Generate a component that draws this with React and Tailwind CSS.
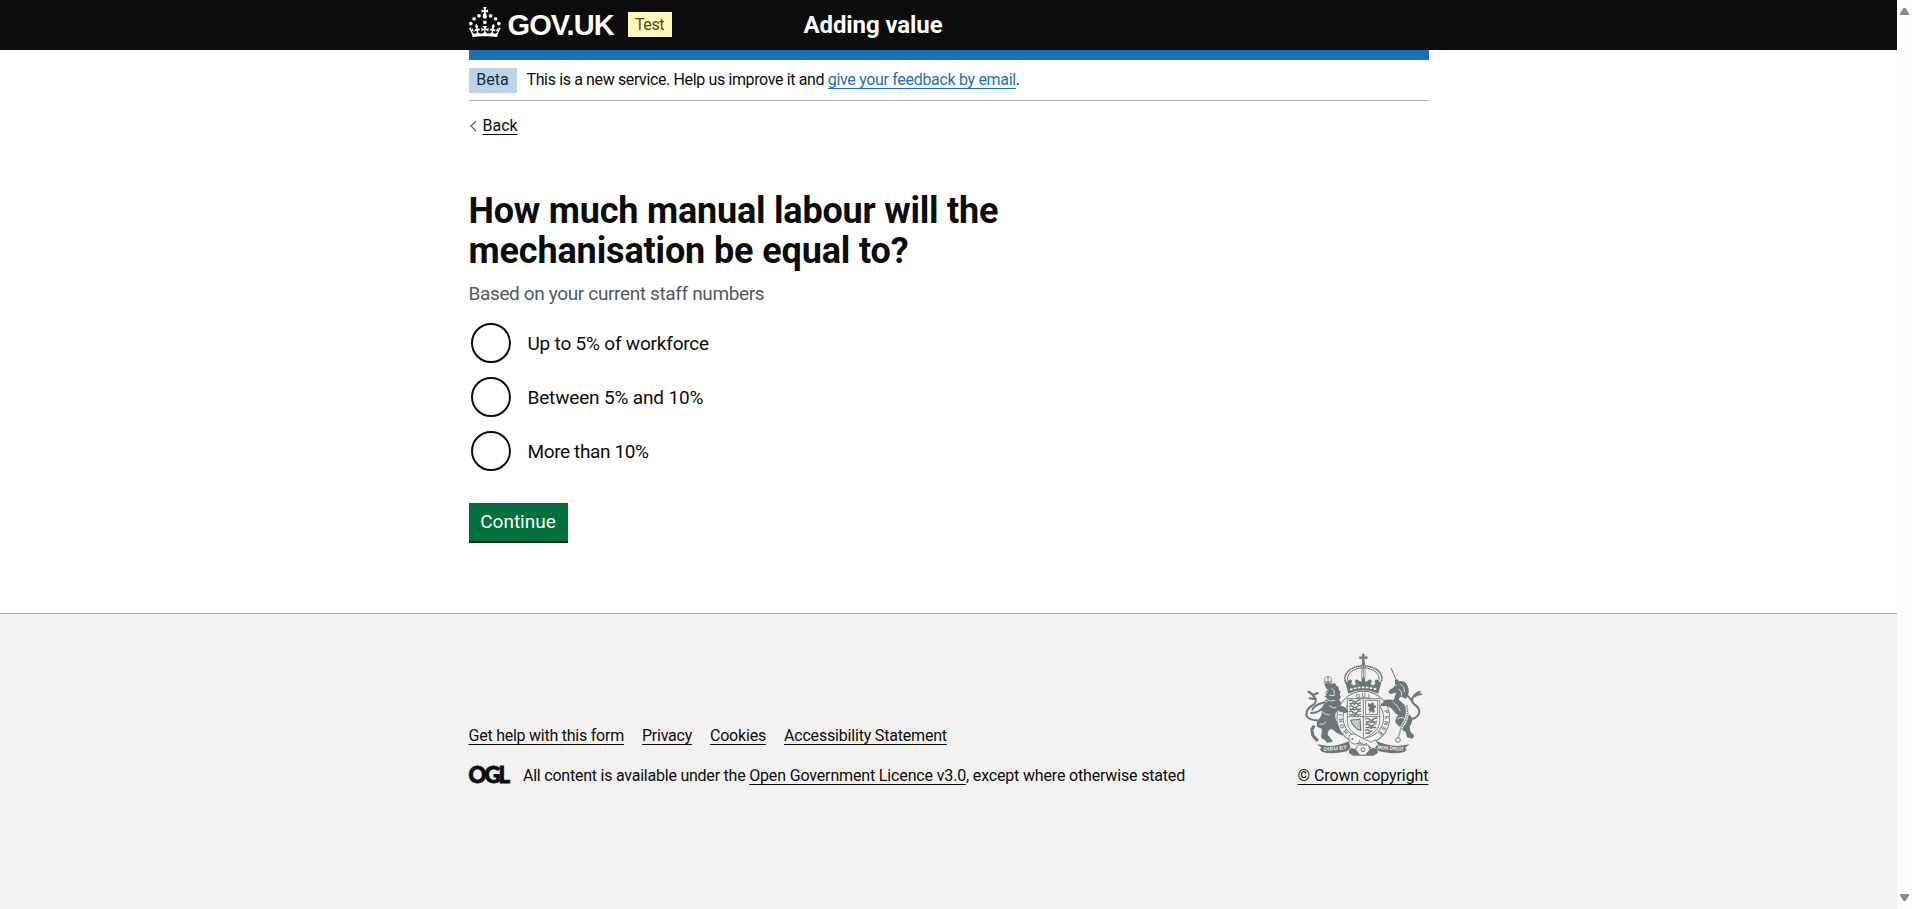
const link = "underline decoration-1 underline-offset-[3px] [text-decoration-skip-ink:none]";

function Crown() {
  return (
    <svg width="32" height="30" viewBox="0 0 64 60" fill="currentColor" aria-hidden="true">
      <circle cx="20" cy="17.6" r="3.7" />
      <circle cx="10.2" cy="23.5" r="3.7" />
      <circle cx="3.7" cy="33.2" r="3.7" />
      <circle cx="31.7" cy="30.6" r="3.7" />
      <circle cx="43.3" cy="17.6" r="3.7" />
      <circle cx="53.2" cy="23.5" r="3.7" />
      <circle cx="59.7" cy="33.2" r="3.7" />
      <path d="M33.1,9.8c.2-.1.3-.3.5-.5l4.6,2.4v-6.8l-4.6,1.5c-.1-.2-.3-.3-.5-.5l1.9-5.9h-6.7l1.9,5.9c-.2.1-.3.3-.5.5l-4.6-1.5v6.8l4.6-2.4c.1.2.3.3.5.5l-2.6,8c-.9,2.8,1.2,5.7,4.1,5.7h0c3,0,5.1-2.9,4.1-5.7l-2.6-8ZM37,37.9s-3.4,3.8-4.1,6.1c2.2,0,4.2-.5,6.4-2.8l-.7,8.5c-2-2.8-4.4-4.1-5.7-3.8.1,3.1.5,6.7,5.8,7.2,3.7.3,6.7-1.5,7-3.8.4-2.6-2-4.3-3.7-1.6-1.4-4.5,2.4-6.1,4.9-3.2-1.9-4.5-1.8-7.7,2.4-10.9,3,4,2.6,7.3-1.2,11.1,2.4-1.3,6.2,0,4,4.6-1.2-2.8-3.7-2.2-4.2.2-.3,1.7.7,3.7,3,4.2,1.9.3,4.7-.9,7-5.9-1.3,0-2.4.7-3.9,1.7l2.4-8c.6,2.3,1.4,3.7,2.2,4.5.6-1.6.5-2.8,0-5.3l5,1.8c-2.6,3.6-5.2,8.7-7.3,17.5-7.4-1.1-15.7-1.7-24.5-1.7h0c-8.8,0-17.1.6-24.5,1.7-2.1-8.9-4.7-13.9-7.3-17.5l5-1.8c-.5,2.5-.6,3.7,0,5.3.8-.8,1.6-2.3,2.2-4.5l2.4,8c-1.5-1-2.6-1.7-3.9-1.7,2.3,5,5.2,6.2,7,5.9,2.3-.4,3.3-2.4,3-4.2-.5-2.4-3-3.1-4.2-.2-2.2-4.6,1.6-6,4-4.6-3.7-3.7-4.2-7.1-1.2-11.1,4.2,3.2,4.3,6.4,2.4,10.9,2.5-2.8,6.3-1.3,4.9,3.2-1.8-2.7-4.1-1-3.7,1.6.3,2.3,3.3,4.1,7,3.8,5.4-.5,5.7-4.2,5.8-7.2-1.3-.2-3.7,1-5.7,3.8l-.7-8.5c2.2,2.3,4.2,2.7,6.4,2.8-.7-2.3-4.1-6.1-4.1-6.1h10.6Z" />
    </svg>
  );
}

/* Royal coat of arms: crown, garter and shield, lion, unicorn, motto ribbon. */
function CoatOfArms() {
  const ink = "#6c7679";
  const paper = "#f3f2f1";
  return (
    <svg width="118" height="104" viewBox="45 38 354 312" aria-hidden="true" fill={ink} stroke="none">
      {/* lion */}
      <circle cx="117" cy="118" r="10" fill={paper} stroke={ink} strokeWidth="3" strokeDasharray="4 1.5" />
      <path d="M104 125h26M117 108v18" stroke={ink} strokeWidth="3" />
      <path d="M105 130q12-4 24 0l9-2 4 8 7 3 0 9 6 6-3 8 4 9-5 6 3 8 20 10 10 8-2 8-10 2-24-6-8 12q-4 12 4 26l8 20 14 8 4 10-12 2-16-8-12-10q-8-2-12 6l-2 10 10 12q6 4 4 10l-16 2q-6-10-14-12l-4-8q4-14 2-22l-14-6q-4-14 10-28 6-8 4-22 2-18 18-26l-8-2 6-8-8-4 7-6-6-7 8-5-4-9z" />
      <path d="M76 256l-8 12 4 18 14 16" fill="none" stroke={ink} strokeWidth="9" strokeLinejoin="round" />
      <path d="M108 146l10 3M106 156l10 1M128 144q10 6 8 18M120 164q8 4 18 0M112 176q12 10 26 4M120 196q14 10 28 6M100 214q8 10 22 10M92 252q12 2 20-8" stroke={paper} strokeWidth="2.5" fill="none" />
      <path d="M108 186q-30 6-38 22M100 204q-14 14-34 14M84 240q-26 0-32-16 0-20 20-30 10-6 8-18-6-12-22-22M58 154q10 2 14 12M72 164l14-6M76 176l-14-2" fill="none" stroke={ink} strokeWidth="6" strokeLinecap="round" />
      {/* unicorn */}
      <path d="M306 83l16 36" stroke={ink} strokeWidth="3" />
      <path d="M318 119l8-2 4 6q16-4 24 10 8 14 4 28 0 10-8 14l-12-6q-10 2-8 10l14 12q12 12 16 30 8 6 10 18-2 12-8 18l2 16 12 14-6 8-16-4-4-16q-10-4-16-14l-14-12q-4-12 8-24-10-4-16-16-8-10-24-12-14 0-16-8l8-8q18-6 34-2l4-12 4-10-18 4-6-6 4-6q14-8 16-16z" />
      <path d="M316 134l7 1M334 132q14 8 12 24M330 146q10 8 8 20M310 184q18 12 24 28M324 236q12-8 22-2M336 256q10 0 16-8" stroke={paper} strokeWidth="2.5" fill="none" />
      <path d="M352 238q30 0 38-18 4-16-14-28-12-10-4-22 8-12 20-16M396 162q-12-2-18 6M366 178l-8-10" fill="none" stroke={ink} strokeWidth="6" strokeLinecap="round" />
      <path d="M354 196q4 30-6 48-14 18-20 48" fill="none" stroke={paper} strokeWidth="9" />
      <path d="M354 196q4 30-6 48-14 18-20 48" fill="none" stroke={ink} strokeWidth="5" strokeDasharray="4 3" />
      <circle cx="327" cy="299" r="7" fill={paper} stroke={ink} strokeWidth="3" />
      {/* garter */}
      <circle cx="223" cy="232" r="70" fill={paper} stroke={ink} strokeWidth="21" />
      <circle cx="223" cy="232" r="70" fill="none" stroke={paper} strokeWidth="16" />
      <g fontFamily="Liberation Sans" fontWeight="700" fontSize="17" textAnchor="middle">
        <text x="206" y="173">Q</text>
        <text x="224" y="171">U</text>
        <text x="239" y="172">I</text>
        <text transform="translate(160 224) rotate(-86)">I</text>
        <text transform="translate(161 240) rotate(-96)">N</text>
        <text transform="translate(164 256) rotate(-110)">O</text>
        <text transform="translate(174 272) rotate(-126)">H</text>
        <text transform="translate(287 216) rotate(76)">P</text>
        <text transform="translate(288 232) rotate(90)">E</text>
        <text transform="translate(286 247) rotate(104)">N</text>
        <text transform="translate(280 262) rotate(118)">S</text>
        <text transform="translate(270 275) rotate(134)">E</text>
      </g>
      {/* shield */}
      <path d="M175 175h97v68c0 24-22 40-49 52-27-12-48-28-48-52z" fill={paper} stroke={ink} strokeWidth="2.5" />
      <path d="M223 174v118M175 229h97" stroke={ink} strokeWidth="2.5" />
      <g fill="none" stroke={ink} strokeWidth="4">
        <path d="M180 182q6-6 12 0t12 0 12-3M181 188q6 4 10 0l5 4 6-4 6 3 8-4M184 193l4-3M204 193l5-3" />
        <path d="M180 199q6-6 12 0t12 0 12-3M181 205q6 4 10 0l5 4 6-4 6 3 8-4M184 210l4-3M204 210l5-3" />
        <path d="M180 216q6-6 12 0t12 0 12-3M181 222q6 4 10 0l5 4 6-4 6 3 8-4" />
        <path d="M229 237q6-6 12 0t12 0 12-3M230 243q6 4 10 0l5 4 6-4 6 3 8-4M234 248l4-3M252 248l5-3" />
        <path d="M229 254q6-6 12 0t12 0 10-3M230 260q6 4 10 0l5 4 6-4 6 3 4-4" />
        <path d="M228 271q6-6 12 0t10 0M229 277q6 4 10 0l5 2" />
      </g>
      <rect x="230" y="180" width="36" height="43" fill="none" stroke={ink} strokeWidth="2.5" />
      <path d="M238 188l8 3 3-5 7 4-3 7 6-3 2 6-7 6 4 6-5 7-4-6-9 6 2-8-5-5 6-3-6-5z" />
      <path d="M185 240c10-4 14 2 28-4l2 34c-8-2-22-8-30-30z" fill="none" stroke={ink} strokeWidth="3.5" />
      <path d="M191 243l4 14M197 243l3 20M203 241l2 26M209 240l1 28" stroke={ink} strokeWidth="2" />
      {/* paws over the garter */}
      <path d="M146 196q14-2 28 10l4 8-8 4-18-4-12-10z" />
      <path d="M316 188q-20-10-38 0l-4 8 10 2q12-4 30 2z" />
      {/* crown */}
      <path d="M219 40h8l-1 9 9-1v8l-9-1 2 20h-10l2-20-9 1v-8l9 1z" />
      <path d="M170 126c-10-26 14-48 53-50 39 2 64 24 53 50" fill="none" stroke={ink} strokeWidth="6" strokeLinecap="round" strokeDasharray="0.1 6.5" />
      <path d="M177 124c-7-22 13-40 46-42 33 2 53 20 46 42" fill="none" stroke={ink} strokeWidth="3" />
      <path d="M218 78v36M228 78v36" stroke={ink} strokeWidth="2" />
      <path d="M223 78v38" stroke={ink} strokeWidth="5" strokeLinecap="round" strokeDasharray="0.1 7" />
      <path d="M168 122l8 4q2-10 10-8 6 4 0 12l10 6 6-8q-8-4-2-10 8-2 10 4l8 2q-2-10 5-14 7 4 5 14l8-2q2-6 10-4 6 6-2 10l6 8 10-6q-6-8 0-12 8-2 10 8l8-4-10 38q-48-20-90 0z" />
      <path d="M183 148q40-14 82 0" fill="none" stroke={paper} strokeWidth="5" strokeDasharray="8 4" />
      {/* ribbon */}
      <path d="M84 312l20 3c26 6 52-2 76-12l4 20-10 10c-26 6-50 8-74 2l-8-8 6-4z" />
      <path d="M362 312l-20 3c-26 6-54-2-78-12l-4 20 10 10c26 6 52 8 76 2l8-8-6-4z" />
      <g fontFamily="Liberation Sans" fontWeight="700" fontSize="15" fill={paper}>
        <text x="104" y="329" textLength="70" lengthAdjust="spacingAndGlyphs" transform="rotate(-5 140 324)">DIEU ET</text>
        <text x="266" y="329" textLength="78" lengthAdjust="spacingAndGlyphs" transform="rotate(5 306 324)">MON DROIT</text>
      </g>
      {/* strap and buckle */}
      <path d="M180 286q12-10 26 0l40 20 12-8 10 14-14 14-42-20-14 6q-22-6-18-26z" fill={paper} stroke={ink} strokeWidth="2.5" />
      <circle cx="190" cy="296" r="3" />
      <circle cx="212" cy="302" r="2.5" />
      <circle cx="232" cy="310" r="2.5" />
      <path d="M180 338q-2-12 8-14l14 2 2-8 8 10q10 12 22 0l8-10 2 8 14-2q10 2 8 14l-12 8h-62z" />
      <path d="M206 314h32l4 14-12 16h-18l-12-16z" fill={paper} stroke={ink} strokeWidth="2.5" />
      <circle cx="222" cy="328" r="6" fill="none" stroke={ink} strokeWidth="3" />
    </svg>
  );
}

function Radio({ label, tracking }) {
  return (
    <label className="flex h-11 items-center pl-0.5">
      <span className="size-10 shrink-0 rounded-full border-2 border-[#0b0c0c] bg-white" />
      <span className={`pl-[17px] text-[19px] leading-[25px] ${tracking}`}>{label}</span>
    </label>
  );
}

export default function App() {
  return (
    <div className="flex h-[909px] w-full overflow-hidden bg-white font-[Roboto,sans-serif] text-[#0b0c0c]">
      <div className="flex min-w-0 flex-1 flex-col">
        <header className="h-[50px] shrink-0 bg-[#0b0c0c] text-white">
          <div className="mx-auto flex h-full w-[960px] items-center">
            <div className="flex w-[335px] items-center">
              <div className="flex items-center pb-[6px]">
                <Crown />
              </div>
              <span className="ml-[7px] w-[110px] font-['Liberation_Sans',sans-serif] text-[29px] leading-[50px] font-bold tracking-[-0.9px]">
                GOV.UK
              </span>
              <span className="mb-px ml-2.5 flex h-[25px] w-11 items-center justify-center bg-[#fff7bf] text-base leading-5 tracking-[-0.4px] text-[#594d00]">
                Test
              </span>
            </div>
            <span className="text-2xl font-bold tracking-[-0.1px]">Adding value</span>
          </div>
        </header>

        <div className="mx-auto w-[960px] grow">
          <div className="h-2.5 bg-[#1d70b8]" />
          <div className="flex h-[41px] items-center gap-2.5 border-b border-[#b1b4b6]">
            <span className="flex h-[25px] w-12 items-center justify-center bg-[#bbd4ea] text-base text-[#0c2d4a]">Beta</span>
            <p className="text-base whitespace-pre">
              <span className="tracking-[-0.37px]">This is a new service. Help us improve it and </span>
              <a className={`${link} tracking-[-0.32px] text-[#1d70b8]`}>give your feedback by email</a>.
            </p>
          </div>
          <div className="mt-[15px] flex h-5 items-center">
            <svg width="7" height="12" viewBox="0 0 7 12" fill="none" stroke="#505a5f" strokeWidth="1.2" className="ml-px">
              <path d="M6 1L1 6l5 5" />
            </svg>
            <a className={`${link} ml-[6px] text-base`}>Back</a>
          </div>

          <main className="pt-[55px]">
            <h1 className="text-4xl leading-[40px] font-bold whitespace-pre">
              <span className="block tracking-[-0.21px]">How much manual labour will the</span>
              <span className="block tracking-[-0.14px]">mechanisation be equal to?</span>
            </h1>
            <p className="mt-2.5 text-[19px] leading-[25px] tracking-[-0.36px] text-[#505a5f]">Based on your current staff numbers</p>
            <div className="mt-[15px] flex flex-col gap-2.5">
              <Radio label="Up to 5% of workforce" tracking="tracking-[-0.2px]" />
              <Radio label="Between 5% and 10%" tracking="tracking-[-0.16px]" />
              <Radio label="More than 10%" tracking="tracking-[-0.38px]" />
            </div>
            <button className="mt-[30px] block h-[38px] w-[99px] bg-[#00703c] text-[19px] text-white shadow-[0_2px_0_#002d18]">
              Continue
            </button>
          </main>
        </div>

        <footer className="h-[296px] shrink-0 border-t border-[#b1b4b6] bg-[#f3f2f1]">
          <div className="mx-auto flex w-[960px] justify-between pt-[39px]">
            <div className="flex flex-col justify-end gap-5 text-base leading-5">
              <nav className="flex gap-[18px]">
                <a className={`${link} tracking-[-0.24px]`}>Get help with this form</a>
                <a className={`${link} tracking-[-0.24px]`}>Privacy</a>
                <a className={`${link} tracking-[-0.2px]`}>Cookies</a>
                <a className={`${link} tracking-[-0.19px]`}>Accessibility Statement</a>
              </nav>
              <div className="flex h-5 items-center whitespace-pre">
                <span className="w-[54.5px] pb-[3px] font-[Lato,sans-serif] text-[22px] leading-5 font-black tracking-[-1.9px] [-webkit-text-stroke:0.9px_#0b0c0c]">
                  OGL
                </span>
                <p>
                  <span className="tracking-[-0.23px]">All content is available under the </span>
                  <a className={`${link} tracking-[-0.15px]`}>Open Government Licence v3.0</a>
                  <span className="tracking-[-0.17px]">, except where otherwise stated</span>
                </p>
              </div>
            </div>
            <div className="flex w-[131px] flex-col items-center gap-[9px] text-base leading-5">
              <CoatOfArms />
              <a className={`${link} tracking-[-0.1px] whitespace-nowrap`}>© Crown copyright</a>
            </div>
          </div>
        </footer>
      </div>

      <div className="flex w-[15px] shrink-0 flex-col items-center justify-between bg-[#fcfcfc] py-2">
        <svg width="9" height="7" viewBox="0 0 9 7" fill="#8b8b8b">
          <path d="M3.5 0h2L9 5.5V7H0V5.5z" />
        </svg>
        <svg width="9" height="7" viewBox="0 0 9 7" fill="#8b8b8b">
          <path d="M3.5 7h2L9 1.5V0H0v1.5z" />
        </svg>
      </div>
    </div>
  );
}
